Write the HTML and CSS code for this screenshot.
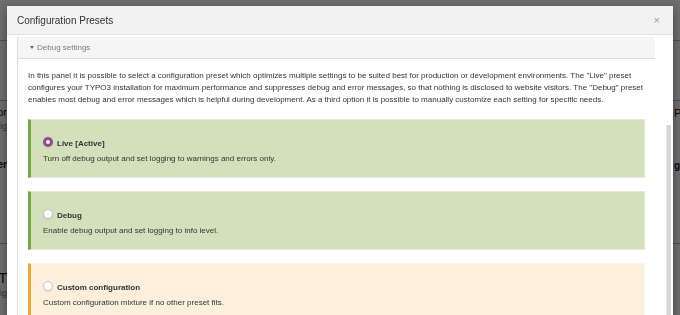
FILE: index.html
```html
<!DOCTYPE html>
<html lang="en">
<head>
  <meta charset="UTF-8">
  <meta name="viewport" content="width=device-width, initial-scale=1.0">
  <title>Configuration Presets</title>
  <link rel="stylesheet" href="styles.css">
</head>
<body>

<!-- Page behind the modal -->
<div class="page">
  <div class="page-top"></div>
  <div class="page-band"></div>
  <div class="page-row">
    <div class="side side-left">
      <div class="bg-title">Maintainer Monitor</div>
      <div class="bg-sub">Config</div>
      <div class="bg-bold">Feature Toggle Manager</div>
    </div>
    <div class="side side-right">
      <div class="bg-title">Presets</div>
      <div class="bg-sub">&nbsp;</div>
      <div class="bg-bold">g</div>
    </div>
  </div>
  <div class="page-row page-row-low">
    <div class="side side-left">
      <div class="bg-big">T</div>
      <div class="bg-sub">Config</div>
    </div>
  </div>
</div>

<div class="backdrop"></div>

<!-- Modal -->
<div class="modal">
  <div class="modal-header">
    <span class="modal-title">Configuration Presets</span>
    <span class="modal-close">&times;</span>
  </div>
  <div class="modal-body">
    <div class="panel">
      <div class="panel-heading"><span class="caret"></span>Debug settings</div>
      <div class="panel-body">
        <p class="intro">In this panel it is possible to select a configuration preset which optimizes multiple settings to be suited best for production or development environments. The "Live" preset configures your TYPO3 installation for maximum performance and suppresses debug and error messages, so that nothing is disclosed to website visitors. The "Debug" preset enables most debug and error messages which is helpful during development. As a third option it is possible to manually customize each setting for specific needs.</p>

        <div class="preset preset-success">
          <div class="preset-label"><span class="radio radio-checked"></span>Live [Active]</div>
          <div class="preset-desc">Turn off debug output and set logging to warnings and errors only.</div>
        </div>

        <div class="preset preset-success">
          <div class="preset-label"><span class="radio"></span>Debug</div>
          <div class="preset-desc">Enable debug output and set logging to info level.</div>
        </div>

        <div class="preset preset-warning">
          <div class="preset-label"><span class="radio"></span>Custom configuration</div>
          <div class="preset-desc">Custom configuration mixture if no other preset fits.</div>
        </div>
      </div>
    </div>
  </div>
  <div class="scroll-thumb"></div>
</div>

</body>
</html>
```

FILE: styles.css
```css
/* General */
body {
  margin: 0;
  height: 315px;
  overflow: hidden;
  font-family: "Liberation Sans", Arial, sans-serif;
  color: #333;
}

/* Page behind overlay */
.page {
  background: #fff;
  height: 315px;
}
.page-top {
  height: 40px;
  border-bottom: 1px solid #bbb;
}
.page-band {
  height: 59px;
  border-bottom: 1px solid #bbb;
}
.page-row {
  height: 142px;
  border-bottom: 1px solid #bbb;
  display: flex;
  justify-content: space-between;
}
.page-row-low {
  height: 80px;
  border-bottom: 0;
}
.side {
  width: 7px;
  display: flex;
  flex-direction: column;
  white-space: nowrap;
}
.side-left {
  align-items: flex-end;
  padding-top: 4px;
}
.side-right {
  width: 6px;
  align-items: flex-start;
  padding-top: 5px;
}
.page-row-low .side-left {
  padding-top: 26px;
}
.bg-title {
  font-size: 11px;
  line-height: 14px;
  color: #111;
}
.bg-sub {
  font-size: 9px;
  line-height: 14px;
  color: #777;
  margin-bottom: 26px;
}
.bg-bold {
  font-size: 10px;
  font-weight: bold;
  color: #111;
}
.bg-big {
  font-size: 14px;
  line-height: 16px;
  color: #111;
}
.backdrop {
  position: fixed;
  inset: 0;
  background: rgba(0, 0, 0, 0.57);
}

/* Modal */
.modal {
  position: absolute;
  left: 7px;
  top: 6px;
  width: 666px;
  height: 330px;
  background: #fff;
  box-shadow: 0 3px 9px rgba(0, 0, 0, 0.4);
  overflow: hidden;
}
.modal-header {
  height: 28px;
  border-bottom: 1px solid #e2e2e2;
  background: #f2f2f2;
  display: flex;
  align-items: center;
  justify-content: space-between;
  padding: 0 13px 0 10px;
}
.modal-title {
  font-size: 10px;
  color: #333;
}
.modal-close {
  font-size: 11px;
  color: #999;
  line-height: 1;
}
.modal-body {
  padding: 2px 18px 0 10px;
}
.scroll-thumb {
  position: absolute;
  right: 2px;
  top: 119px;
  width: 4px;
  height: 220px;
  background: #d6d6d6;
  border-left: 1px solid #e6e6e6;
}

/* Panel */
.panel {
  border-left: 1px solid #ddd;
}
.panel-heading {
  height: 21px;
  border-bottom: 1px solid #ddd;
  background: #f5f5f5;
  padding-left: 12px;
  display: flex;
  align-items: center;
  font-size: 8px;
  color: #737b84;
}
.caret {
  width: 0;
  height: 0;
  border-top: 3px solid #666;
  border-left: 2.5px solid transparent;
  border-right: 2.5px solid transparent;
  margin-right: 3px;
}
.panel-body {
  padding: 11px 10px 0 10px;
}
.intro {
  margin: 0 0 13px;
  font-size: 8px;
  line-height: 12px;
}

/* Presets */
.preset {
  margin-bottom: 13px;
  padding: 16px 12px 12px 12px;
  border: 1px solid;
  border-left-width: 3px;
}
.preset-success {
  background: #d3e0bc;
  border-color: #e3ecd5;
  border-left-color: #78a843;
}
.preset-warning {
  background: #fcefdc;
  border-color: #fdf5ea;
  border-left-color: #f0a53a;
}
.preset-label {
  display: flex;
  align-items: center;
  height: 14px;
  font-size: 8px;
  font-weight: bold;
}
.preset-desc {
  margin-top: 3px;
  font-size: 8px;
  line-height: 12px;
}
.radio {
  box-sizing: border-box;
  width: 10px;
  height: 10px;
  border-radius: 50%;
  border: 1px solid #c4c4c4;
  background: #fff;
  margin-right: 4px;
  margin-top: -3px;
  box-shadow: 0 1px 1px rgba(0, 0, 0, 0.08);
}
.radio-checked {
  border: 3.5px solid #8c4c8c;
  background: #f4eef4;
}
```
